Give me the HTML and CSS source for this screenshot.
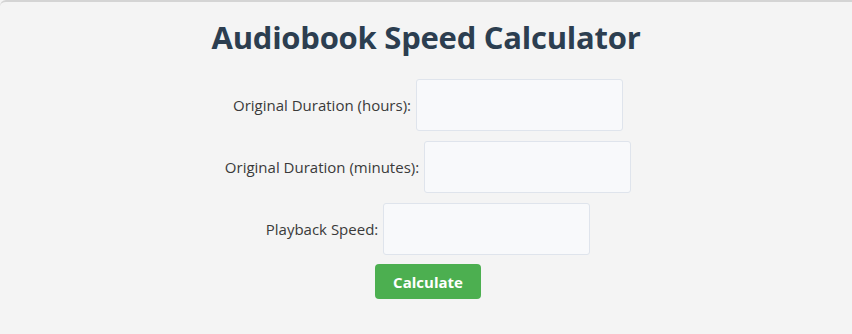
FILE: index.html
```html
<!DOCTYPE html>
<html lang="en">
<head>
    <meta charset="UTF-8">
    <meta name="viewport" content="width=device-width, initial-scale=1.0">
    <title>Audiobook Speed Calculator</title>
    <link rel="stylesheet" href="styles.css">
</head>
<body>

    <div class="container">
        <h1>Audiobook Speed Calculator</h1>

        <form class="calc-form" id="calcForm">
            <div class="row">
                <label for="hours">Original Duration (hours):</label>
                <input type="number" id="hours">
            </div>
            <div class="row">
                <label for="minutes">Original Duration (minutes):</label>
                <input type="number" id="minutes">
            </div>
            <div class="row">
                <label for="speed">Playback Speed:</label>
                <input type="number" id="speed" step="0.1">
            </div>
            <button type="submit">Calculate</button>
        </form>

        <p class="result" id="result"></p>
    </div>

</body>
</html>
```

FILE: styles.css
```css
body {
    font-family: "Open Sans", "Noto Sans", sans-serif;
    margin: 0;
    padding: 0;
    background-color: #f4f4f4;
}

.container {
    border-top: 2px solid #d4d4d4;
    border-top-left-radius: 6px;
    min-height: 332px;
    text-align: center;
}

h1 {
    color: #2c3e50;
    font-size: 31px;
    letter-spacing: -0.25px;
    margin: 0;
    padding: 14px 0 21px;
}

.calc-form {
    display: flex;
    flex-direction: column;
    align-items: center;
    gap: 10px;
    padding-left: 4px;
}

.row {
    display: flex;
    align-items: center;
    gap: 5px;
}

.row label {
    color: #3a3a3a;
    font-size: 15px;
}

.row input {
    box-sizing: border-box;
    width: 207px;
    height: 52px;
    padding: 10px;
    border: 1px solid #dfe4ec;
    border-radius: 3px;
    background-color: #f8f9fb;
}

.calc-form button {
    width: 106px;
    height: 35px;
    margin-top: -1px;
    background-color: #4caf50;
    color: white;
    border: none;
    border-radius: 4px;
    font-family: inherit;
    font-size: 15px;
    font-weight: bold;
    cursor: pointer;
}
```
